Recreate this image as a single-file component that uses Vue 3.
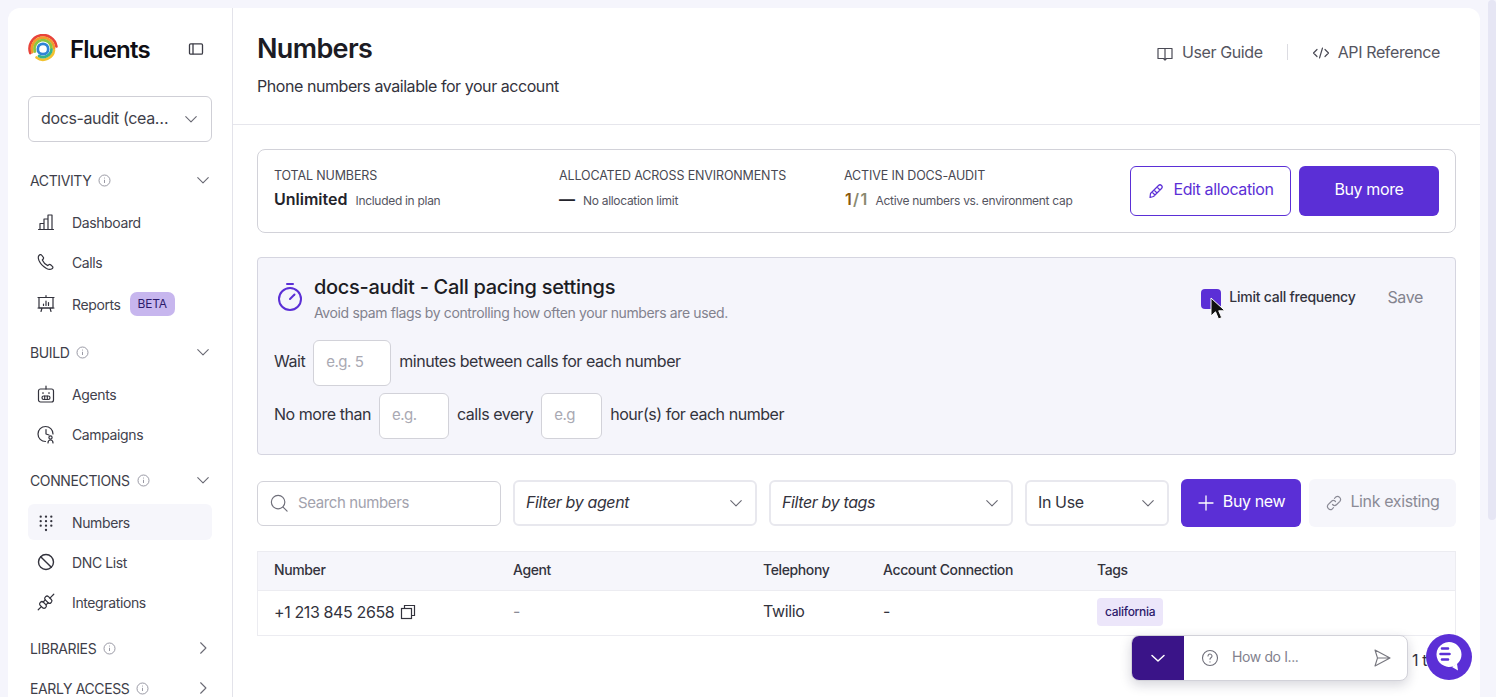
<template>
  <div class="shell">
    <aside class="side">
      <div class="brand">
        <svg class="logo" width="30" height="30" viewBox="0 0 30 30" fill="none" stroke-width="2.700" stroke-linecap="round">
          <path d="M2.300 19A13.500 13.500 0 1 1 28.400 12.500" stroke="#e8443a"/>
          <path d="M4.500 18A11 11 0 1 1 26 14.500" stroke="#f39a2c"/>
          <path d="M7 17.500A8.500 8.500 0 1 1 23.500 14.500" stroke="#8cc63f"/>
          <path d="M26 16A11 11 0 0 1 8.500 23.500" stroke="#f2c230"/>
          <path d="M23.500 15.500A8.500 8.500 0 0 1 11 22" stroke="#35b38a"/>
          <circle cx="15" cy="15" r="5.200" stroke="#2f84d6"/>
        </svg>
        <span class="brand-name">Fluents</span>
        <svg class="collapse" width="16" height="16" viewBox="0 0 16 16" fill="none" stroke="#3c3c46" stroke-width="1.300"><rect x="1.500" y="2.800" width="13" height="10.400" rx="1.200"/><path d="M5 2.800v10.400"/></svg>
      </div>
      <div class="env"><span class="env-text">docs-audit (cea…</span><svg class="chev" viewBox="0 0 12 12"><path d="M1.500 4l4.500 4.500L10.500 4"/></svg></div>

      <template v-for="group in groups" :key="group.name">
        <div class="group-head" :class="{ closed: !group.items.length }">
          <span class="group-name">{{ group.name }}</span>
          <svg class="info" width="13" height="13" viewBox="0 0 13 13" fill="none" stroke="#8f8f9b" stroke-width=".9"><circle cx="6.500" cy="6.500" r="5.500"/><path d="M6.500 5.800v3.200M6.500 3.600v.9"/></svg>
          <svg v-if="group.items.length" class="chev right" viewBox="0 0 12 12"><path d="M1.500 4l4.500 4.500L10.500 4"/></svg>
          <svg v-else class="chev right" viewBox="0 0 12 12"><path d="M4 1.500L8.500 6 4 10.500"/></svg>
        </div>
        <div v-for="item in group.items" :key="item.label" class="nav" :class="{ active: item.active, tall: item.badge }">
          <svg class="nav-ico" width="20" height="20" viewBox="0 0 20 20" fill="none" stroke="#33333d" stroke-width="1.200" stroke-linecap="round" stroke-linejoin="round" v-html="item.icon"></svg>
          <span>{{ item.label }}</span>
          <span v-if="item.badge" class="badge">{{ item.badge }}</span>
        </div>
      </template>
    </aside>

    <main class="main">
      <header class="head">
        <div>
          <h1>Numbers</h1>
          <p>Phone numbers available for your account</p>
        </div>
        <div class="links">
          <span class="link"><svg width="18" height="18" viewBox="0 0 18 18" fill="none" stroke="#4a4a55" stroke-width="1.200" stroke-linejoin="round"><path d="M9 4.500H2v10h5.500L9 16l1.500-1.500H16v-10H9zM9 4.500V16"/></svg>User Guide</span>
          <i class="vr"></i>
          <span class="link"><svg width="18" height="18" viewBox="0 0 18 18" fill="none" stroke="#4a4a55" stroke-width="1.200" stroke-linecap="round" stroke-linejoin="round"><path d="M5 5.500L1.500 9 5 12.500M13 5.500L16.500 9 13 12.500M10.500 4l-3 10"/></svg>API Reference</span>
        </div>
      </header>

      <div class="content">
        <section class="summary">
          <div class="stat">
            <div class="stat-label">TOTAL NUMBERS</div>
            <div class="stat-row"><b>Unlimited</b><small>Included in plan</small></div>
          </div>
          <div class="stat">
            <div class="stat-label">ALLOCATED ACROSS ENVIRONMENTS</div>
            <div class="stat-row"><b>—</b><small>No allocation limit</small></div>
          </div>
          <div class="stat grow">
            <div class="stat-label">ACTIVE IN DOCS-AUDIT</div>
            <div class="stat-row"><b class="ratio"><span>1</span>/1</b><small>Active numbers vs. environment cap</small></div>
          </div>
          <button class="btn outline"><svg width="18" height="18" viewBox="0 0 18 18" fill="none" stroke="#5b2fd6" stroke-width="1.200" stroke-linejoin="round"><path d="M3.500 11.500L11.500 3.500a2 2 0 0 1 3 3L6.500 14.500 3 15.500zM10 5l3 3M5 10l3 3M7 8l3 3"/></svg><span>Edit allocation</span></button>
          <button class="btn solid more"><span>Buy more</span></button>
        </section>

        <section class="pacing">
          <div class="pacing-top">
            <svg class="timer" width="28" height="32" viewBox="0 0 28 32" fill="none" stroke="#5b2fd6" stroke-width="2" stroke-linecap="round"><path d="M11 3h6"/><circle cx="14" cy="18" r="11"/><path d="M14 18l4.500-4.500"/></svg>
            <div class="pacing-title">
              <h2>docs-audit - Call pacing settings</h2>
              <p>Avoid spam flags by controlling how often your numbers are used.</p>
            </div>
            <label class="limit"><span class="check"></span><span class="limit-text">Limit call frequency</span></label>
            <span class="save">Save</span>
            <svg class="cursor" width="17" height="24" viewBox="0 0 17 24"><path d="M1 1v18l4.500-4.200L8.500 22l3.200-1.400-3-6.800H15z" fill="#111" stroke="#fff" stroke-width="1"/></svg>
          </div>
          <div class="rule first"><span class="t">Wait</span><span class="field w78"><span class="t">e.g. 5</span></span><span class="t">minutes between calls for each number</span></div>
          <div class="rule"><span class="t">No more than</span><span class="field w70"><span class="t">e.g.</span></span><span class="t">calls every</span><span class="field w61"><span class="t">e.g</span></span><span class="t">hour(s) for each number</span></div>
        </section>

        <section class="toolbar">
          <div class="search"><svg width="18" height="18" viewBox="0 0 20 20" fill="none" stroke="#6f6f7a" stroke-width="1.300" stroke-linecap="round"><circle cx="9" cy="9" r="7.500"/><path d="M14.500 14.500l4.500 4.500"/></svg><span class="s">Search numbers</span></div>
          <div class="select w244"><em class="t3">Filter by agent</em><svg class="chev" viewBox="0 0 12 12"><path d="M1.500 4l4.500 4.500L10.500 4"/></svg></div>
          <div class="select w244"><em class="t3">Filter by tags</em><svg class="chev" viewBox="0 0 12 12"><path d="M1.500 4l4.500 4.500L10.500 4"/></svg></div>
          <div class="select w144"><span class="t3">In Use</span><svg class="chev" viewBox="0 0 12 12"><path d="M1.500 4l4.500 4.500L10.500 4"/></svg></div>
          <button class="btn solid new"><svg width="18" height="18" viewBox="0 0 18 18" fill="none" stroke="#fff" stroke-width="1.300" stroke-linecap="round"><path d="M9 2v14M2 9h14"/></svg><span>Buy new</span></button>
          <button class="btn ghost"><svg width="18" height="18" viewBox="0 0 18 18" fill="none" stroke="#8b8b96" stroke-width="1.200" stroke-linecap="round"><path d="M7.500 10.500a3 3 0 0 0 4.200 0l3.200-3.200a3 3 0 0 0-4.200-4.200L9.500 4.300M10.500 7.500a3 3 0 0 0-4.200 0l-3.200 3.200a3 3 0 0 0 4.200 4.200l1.200-1.200"/></svg><span>Link existing</span></button>
        </section>

        <section class="table">
          <div class="tr th"><div>Number</div><div>Agent</div><div>Telephony</div><div>Account Connection</div><div>Tags</div></div>
          <div class="tr td">
            <div class="num">+1 213 845 2658 <svg width="16" height="16" viewBox="0 0 16 16" fill="none" stroke="#33333d" stroke-width="1.200"><path d="M4.500 4.500V1.500h10v10h-3"/><rect x="1.500" y="4.500" width="10" height="10"/></svg></div>
            <div class="dim cell">-</div><div class="cell">Twilio</div><div class="cell">-</div><div><span class="tag">california</span></div>
          </div>
        </section>
        <div class="pager">1 to</div>
      </div>

      <div class="chat">
        <div class="chat-toggle"><svg width="16" height="16" viewBox="0 0 16 16" fill="none" stroke="#fff" stroke-width="1.500" stroke-linecap="round" stroke-linejoin="round"><path d="M2 5.500L8 11l6-5.500"/></svg></div>
        <svg class="q" width="18" height="18" viewBox="0 0 18 18" fill="none" stroke="#6f6f7a" stroke-width="1.100" stroke-linecap="round"><circle cx="9" cy="9" r="7.500"/><path d="M7 7a2 2 0 1 1 3 1.800c-.7.400-1 .8-1 1.500"/><path d="M9 12.800v.2"/></svg>
        <span class="chat-text">How do I...</span>
        <svg class="send" width="20" height="20" viewBox="0 0 20 20" fill="none" stroke="#77777f" stroke-width="1.100" stroke-linejoin="round"><path d="M3 2l15 8-15 8 2.500-8zM5.500 10H18"/></svg>
      </div>
      <div class="fab"><svg width="46" height="46" viewBox="0 0 46 46"><path d="M22 9a12.500 12.500 0 1 1 0 25c-1 0-1 0-2-.2-4-1-7-3-9-6.300A12.500 12.500 0 0 1 22 9z" fill="#fff" transform="translate(1 -1)"/><path d="M26 33l6 3.500-1-7z" fill="#fff"/><path d="M16 14.500h6M14.500 20h9M16 25.500h6" stroke="#5b2fd6" stroke-width="2.600" stroke-linecap="round"/></svg></div>
    </main>
    <div class="scroll"><div class="thumb"></div></div>
  </div>
</template>

<script setup>
const groups = [
  { name: 'ACTIVITY', items: [
    { label: 'Dashboard', icon: '<path d="M2.500 17.500h15M4 17.500v-6h4v6M8 17.500V7h4v10.500M12 17.500V3h4v14.500"/>' },
    { label: 'Calls', icon: '<path d="M3 3.500c-1 1-.8 3 0 5 1.500 3.500 4 6 7.500 8 2 1 4 1.200 5.500.3.800-.5 1.200-1.500.6-2.200l-2-1.800c-.6-.5-1.300-.4-1.800 0l-1 .8c-2.300-1-4.500-3.300-5.500-5.600l.9-1c.5-.5.500-1.300 0-1.800L5.500 3c-.7-.7-1.700-.3-2.500.500z"/>' },
    { label: 'Reports', badge: 'BETA', icon: '<rect x="3" y="3.500" width="14" height="10.500"/><path d="M10 1.500v2M2 3.500h16M2 14h16M6 14l-1 3.500M14 14l1 3.500M7.500 11.500v-1.500M10 11.500V7M12.500 11.500V8.500"/>' }
  ] },
  { name: 'BUILD', items: [
    { label: 'Agents', icon: '<rect x="2.500" y="5" width="15" height="13" rx="2"/><path d="M10 2v3M7 8.500v1M13 8.500v1"/><rect x="6" y="12" width="8" height="3.500" rx="1.700"/><path d="M8.700 12v3.500M11.300 12v3.500"/>' },
    { label: 'Campaigns', icon: '<path d="M17 10a7.500 7.500 0 1 0-7.500 7.500"/><path d="M10 5.500v4.500l3 1"/><circle cx="14.500" cy="13.500" r="1.600"/><path d="M12 19c0-2 1-3 2.500-3s2.500 1 2.500 3"/>' }
  ] },
  { name: 'CONNECTIONS', items: [
    { label: 'Numbers', active: true, icon: '<g fill="#33333d" stroke="none"><circle cx="4.700" cy="4.700" r="1.150"/><circle cx="10" cy="4.700" r="1.150"/><circle cx="15.300" cy="4.700" r="1.150"/><circle cx="4.700" cy="9.200" r="1.150"/><circle cx="10" cy="9.200" r="1.150"/><circle cx="15.300" cy="9.200" r="1.150"/><circle cx="4.700" cy="13.700" r="1.150"/><circle cx="10" cy="13.700" r="1.150"/><circle cx="15.300" cy="13.700" r="1.150"/><circle cx="10" cy="18" r="1.150"/></g>' },
    { label: 'DNC List', icon: '<g stroke-width="1.400"><circle cx="10" cy="10" r="7.500"/><path d="M4.700 4.700l10.600 10.600"/></g>' },
    { label: 'Integrations', icon: '<g transform="rotate(-45 10 10)"><path d="M-1 10h4.500M8 8h3M8 12h3M15.500 10H21"/><rect x="3.500" y="6.300" width="4.500" height="7.400" rx="2"/><rect x="11" y="6" width="4.500" height="8" rx="2"/></g>' }
  ] },
  { name: 'LIBRARIES', items: [] },
  { name: 'EARLY ACCESS', items: [] }
]
</script>

<style>
html, body { margin: 0; background: #f5f5fc; overflow: hidden; }
</style>

<style scoped>
* { box-sizing: border-box; }
.shell { display: flex; height: 697px; padding: 8px 0 0 8px; overflow: hidden; font-family: Inter, "Liberation Sans", sans-serif; color: #1c1c24; background: #f5f5fc; position: relative; letter-spacing: -.38px; }
.t { padding-bottom: 4px; }
.t3 { padding-bottom: 3px; }
.side { width: 225px; flex: none; background: #fff; border-right: 1px solid #e3e3ea; border-radius: 12px 0 0 0; padding: 0 20px; overflow: hidden; }
.brand { display: flex; align-items: center; height: 40px; margin-top: 21px; }
.logo { flex: none; margin-right: 1px; }
.brand-name { font-size: 24px; font-weight: 600; color: #0f0f14; margin-left: 11px; letter-spacing: -.8px; }
.collapse { margin-left: 38px; }
.env { height: 46px; margin-top: 27px; width: 184px; border: 1px solid #cfcfd6; border-radius: 6px; display: flex; align-items: center; padding: 0 13px 0 12px; justify-content: space-between; font-size: 16px; color: #3e3e49; }
.env-text { padding-bottom: 3px; }
.chev { width: 14px; height: 14px; fill: none; stroke: #6a6a74; stroke-width: .95; stroke-linecap: round; stroke-linejoin: round; flex: none; }
.group-head { display: flex; align-items: center; height: 20px; margin: 28px 0 0 2px; width: 180px; font-size: 14px; color: #3e3e49; }
.group-head + .nav { margin-top: 14px; }
.nav + .group-head { margin-top: 18px; }
.group-head.closed + .group-head { margin-top: 20px; }
.group-head .info { margin-left: 7px; }
.group-head .right { margin-left: auto; }
.nav { display: flex; align-items: center; height: 36px; margin-top: 4px; width: 184px; padding-left: 8px; border-radius: 6px; font-size: 14px; color: #42424d; }
.nav.tall { height: 40px; }
.nav.active { background: #f6f6fb; }
.nav-ico { flex: none; margin-right: 16px; overflow: visible; }
.badge { margin-left: 9px; background: #c7b6ee; color: #2c1a6b; border-radius: 7px; font-size: 12px; height: 24px; line-height: 24px; padding: 0 8px; letter-spacing: -.2px; }
.main { width: 1247px; flex: none; background: #fff; border-radius: 0 12px 0 0; position: relative; overflow: hidden; }
.head { height: 117px; border-bottom: 1px solid #e6e6ec; padding: 0 40px 0 24px; display: flex; justify-content: space-between; }
h1 { font-size: 27px; font-weight: 600; margin: 23px 0 0; line-height: 36px; color: #1c1c24; letter-spacing: -.65px; }
.head p { margin: 8px 0 0; font-size: 16px; line-height: 22px; color: #33333d; letter-spacing: -.44px; }
.links { display: flex; align-items: center; height: 24px; margin-top: 32px; font-size: 16px; color: #55555f; }
.link { display: flex; align-items: center; gap: 8px; }
.link svg { margin-top: 2px; }
.vr { width: 1px; height: 16px; background: #dcdce2; margin: 0 24px; }
.content { padding: 24px 24px 0; }
.summary { height: 84px; border: 1px solid #d2d2d9; border-radius: 8px; padding: 0 16px; display: flex; align-items: center; }
.stat { width: 285px; flex: none; margin-top: -3px; }
.stat.grow { width: 286px; }
.stat-label { font-size: 12.500px; line-height: 16px; color: #484852; letter-spacing: -.14px; }
.stat-row { display: flex; align-items: baseline; margin-top: 5px; height: 22px; }
.stat-row b { font-size: 16px; font-weight: 600; margin-right: 8px; color: #23232b; letter-spacing: 0; }
.stat-row small { font-size: 12px; color: #55555f; letter-spacing: -.3px; }
.stat-row b.ratio { color: #8a8a70; letter-spacing: 1.300px; margin-left: 1px; margin-right: 7px; }
.ratio span { color: #8a5a10; }
.btn { font: inherit; letter-spacing: -.38px; font-size: 16px; border-radius: 6px; display: flex; align-items: center; justify-content: center; cursor: pointer; flex: none; }
.btn span { padding-bottom: 4px; }
.outline { width: 161px; height: 50px; background: #fff; border: 1px solid #5b2fd6; color: #5b2fd6; gap: 8px; }
.solid { background: #5b2fd6; border: 0; color: #fff; }
.more { width: 140px; height: 50px; margin-left: 8px; }
.pacing { margin-top: 24px; height: 198px; background: #f5f5fb; border: 1px solid #d5d5e0; border-radius: 4px; padding: 0 16px; }
.pacing-top { display: flex; align-items: flex-start; height: 82px; position: relative; }
.timer { margin: 23px 10px 0 2px; flex: none; }
h2 { font-size: 20px; font-weight: 500; margin: 15px 0 0; line-height: 28px; color: #1c1c24; letter-spacing: -.3px; }
.pacing-title p { margin: 2px 0 0; font-size: 14px; line-height: 20px; color: #82828e; letter-spacing: -.37px; }
.limit { display: flex; align-items: center; margin: 29px 0 0 auto; font-size: 14px; font-weight: 500; color: #33333d; gap: 8px; letter-spacing: -.25px; }
.limit-text { padding-bottom: 3px; }
.check { width: 20px; height: 20px; background: #5b2fd6; border-radius: 4px; margin-top: 2px; }
.save { margin: 29px 16px 0 32px; font-size: 16px; color: #83838e; }
.cursor { position: absolute; left: 936px; top: 39px; }
.rule { display: flex; align-items: center; font-size: 16px; color: #33333d; gap: 8px; letter-spacing: -.46px; }
.rule.first { height: 46px; }
.rule + .rule { margin-top: 7px; height: 46px; }
.field { height: 46px; border: 1px solid #d2d2d9; border-radius: 6px; background: #fff; color: #a9a9b3; padding-left: 12px; display: flex; align-items: center; font-size: 15px; }
.w78 { width: 78px; } .w70 { width: 70px; } .w61 { width: 61px; }
.toolbar { margin-top: 24px; display: flex; align-items: center; gap: 12px; height: 48px; }
.search { width: 244px; height: 45px; flex: none; border: 1px solid #d2d2d9; border-radius: 6px; display: flex; align-items: center; gap: 10px; padding-left: 12px; color: #a2a2ad; font-size: 15px; }
.s { padding-bottom: 2px; }
.select { height: 46px; flex: none; border: 2px solid #e8e8ee; border-radius: 6px; display: flex; align-items: center; justify-content: space-between; padding: 0 12px 0 11px; font-size: 16px; color: #33333d; }
.select em { font-style: italic; }
.w244 { width: 244px; } .w144 { width: 144px; }
.new { width: 120px; height: 48px; gap: 8px; }
.ghost { width: 147px; height: 48px; background: #f6f6fb; border: 0; color: #8b8b96; gap: 7px; margin-left: -4px; }
.table { margin-top: 24px; border: 1px solid #ececf1; }
.tr { display: grid; grid-template-columns: 239px 250px 120px 214px 1fr; padding-left: 16px; align-items: center; }
.th { height: 39px; background: #f6f6fb; font-size: 14px; font-weight: 500; color: #33333d; border-bottom: 1px solid #ececf1; padding-bottom: 3px; }
.td { height: 44px; font-size: 16px; color: #33333d; padding-bottom: 2px; }
.num { display: flex; align-items: center; gap: 6px; }
.cell { padding-bottom: 2px; }
.dim { color: #8b8b96; }
.tag { display: inline-block; background: #ece6fa; color: #2c1a6b; font-size: 12px; font-weight: 500; line-height: 28px; height: 28px; padding: 0 8px; border-radius: 4px; letter-spacing: -.3px; vertical-align: middle; }
.pager { position: absolute; left: 1179px; top: 642px; font-size: 16px; color: #33333d; }
.chat { position: absolute; left: 898px; top: 627px; width: 277px; height: 46px; border: 1px solid #d2d2d9; border-radius: 8px; background: #fff; display: flex; align-items: center; box-shadow: 0 4px 12px rgba(30,30,60,.18); overflow: hidden; }
.chat-toggle { width: 52px; height: 46px; background: #3a1488; display: flex; align-items: center; justify-content: center; flex: none; }
.q { margin-left: 17px; flex: none; }
.chat-text { margin-left: 13px; font-size: 14px; color: #82828e; padding-bottom: 3px; }
.send { margin-left: auto; margin-right: 15px; flex: none; }
.fab { position: absolute; left: 1193px; top: 626px; width: 46px; height: 46px; border-radius: 50%; background: #5b2fd6; overflow: hidden; }
.fab svg { display: block; }
.scroll { width: 8px; position: absolute; right: 0; top: 0; bottom: 0; background: #f5f5fc; }
.thumb { width: 8px; height: 520px; background: #e6e6f4; border-radius: 4px; }
</style>
